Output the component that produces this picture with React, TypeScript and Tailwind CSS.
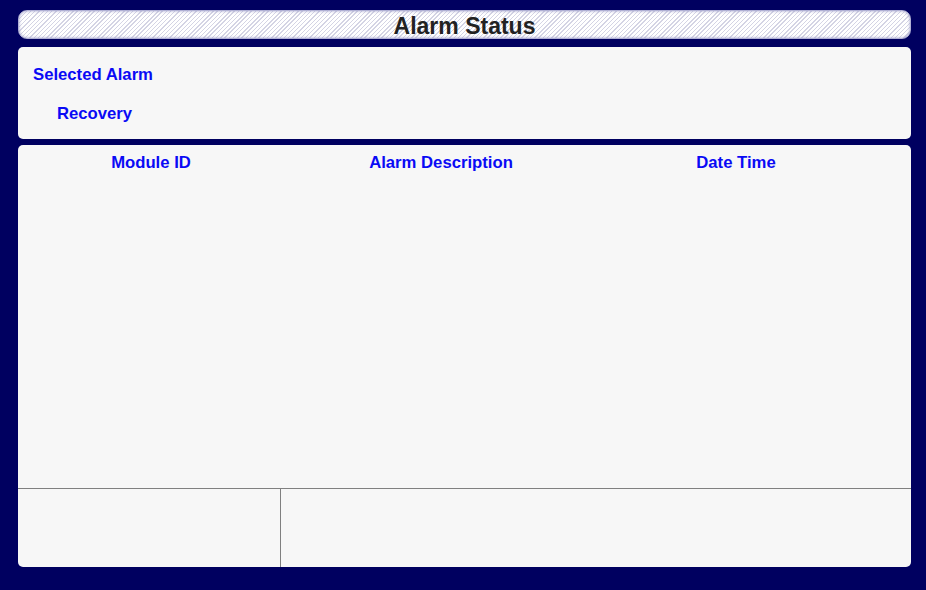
import React from "react";

export default function App() {
  const font = { fontFamily: '"Liberation Sans", Arial, sans-serif' };
  return (
    <div className="w-[926px] h-[590px] bg-[#000060] flex flex-col pl-[18px] pr-[15px] pt-[10px] pb-[23px] gap-[6px]" style={font}>
      <div className="h-[29px] shrink-0 rounded-[9px] border border-[#b0b0d4] shadow-[inset_0_0_3px_#9898c8] bg-[repeating-linear-gradient(135deg,#ffffff_0px,#ffffff_2px,#d4d4e4_2px,#d4d4e4_3px)] flex items-center justify-center">
        <span className="text-[23px] font-bold text-[#222222] leading-none mt-[3px]">Alarm Status</span>
      </div>
      <div className="h-[92px] shrink-0 mt-[2px] rounded-[5px] bg-[#f7f7f7] flex flex-col text-[16.7px] font-bold text-[#0a0af5] leading-none">
        <div className="pl-[15px] pt-[20px]">Selected Alarm</div>
        <div className="pl-[39px] pt-[22px]">Recovery</div>
      </div>
      <div className="flex-1 rounded-[5px] bg-[#f7f7f7] flex flex-col">
        <div className="flex-1 grid grid-cols-[266px_314px_276px] items-start content-start pt-[10px] text-[16.7px] font-bold text-[#0a0af5] leading-none">
          <div className="text-center">Module ID</div>
          <div className="text-center">Alarm Description</div>
          <div className="text-center">Date Time</div>
        </div>
        <div className="h-[79px] border-t border-[#808080] flex">
          <div className="w-[263px] border-r border-[#808080]"></div>
          <div className="flex-1"></div>
        </div>
      </div>
    </div>
  );
}
